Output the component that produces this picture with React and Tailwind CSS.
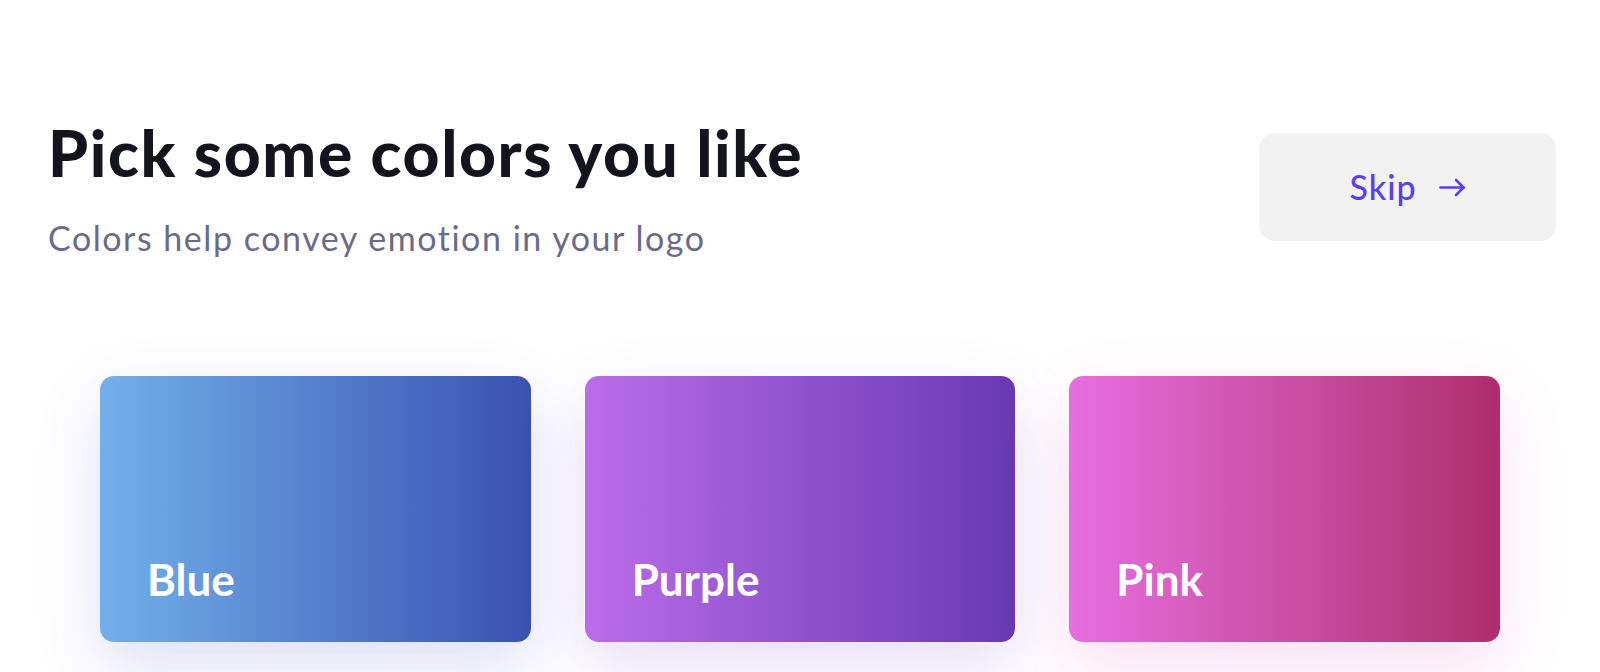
import React from "react";

const COLORS = [
  {
    name: "Blue",
    bg: "bg-gradient-to-r from-[#73b0ea] to-[#3b51b0]",
    shadow: "shadow-[0_24px_64px_rgba(70,80,200,0.18)]",
  },
  {
    name: "Purple",
    bg: "bg-gradient-to-r from-[#bb6ce9] to-[#6839b2]",
    shadow: "shadow-[0_24px_64px_rgba(120,70,200,0.18)]",
  },
  {
    name: "Pink",
    bg: "bg-gradient-to-r from-[#e76ee1] to-[#ae2d6c]",
    shadow: "shadow-[0_24px_64px_rgba(220,80,180,0.18)]",
  },
];

function Arrow() {
  return (
    <svg width="27" height="19" viewBox="0 0 27 19" fill="none" stroke="currentColor" strokeWidth="2.6" strokeLinecap="round" strokeLinejoin="round">
      <path d="M1.5 9.5h23" />
      <path d="M17 2l7.5 7.5L17 17" />
    </svg>
  );
}

function ColorCard({ color }) {
  return (
    <button
      className={`flex h-[266px] items-end rounded-[14px] pb-[41px] pl-[47px] text-left ${color.bg} ${color.shadow}`}
    >
      <span className="text-[44px] font-bold leading-none text-white">{color.name}</span>
    </button>
  );
}

export default function App() {
  return (
    <div className="min-h-screen overflow-hidden bg-white font-['Lato',sans-serif]">
      {/* Header */}
      <div className="flex items-start justify-between pl-12 pr-11 pt-[121px]">
        <div>
          <h1 className="text-[64px] font-black leading-none tracking-[0.025em] text-[#14141f]">Pick some colors you like</h1>
          <p className="mt-9 text-[34px] leading-none tracking-[0.045em] text-[#6b6b89]">Colors help convey emotion in your logo</p>
        </div>
        <button className="mt-3 flex h-[108px] w-[297px] items-center justify-center gap-[22px] rounded-2xl bg-[#f2f2f2] text-[#5a3ef6]">
          <span className="text-[34px] font-medium leading-none tracking-[0.03em]">Skip</span>
          <Arrow />
        </button>
      </div>

      {/* Cards */}
      <div className="mx-auto mt-[121px] grid w-[1400px] grid-cols-3 gap-[54px]">
        {COLORS.map((c) => (
          <ColorCard key={c.name} color={c} />
        ))}
      </div>
    </div>
  );
}
